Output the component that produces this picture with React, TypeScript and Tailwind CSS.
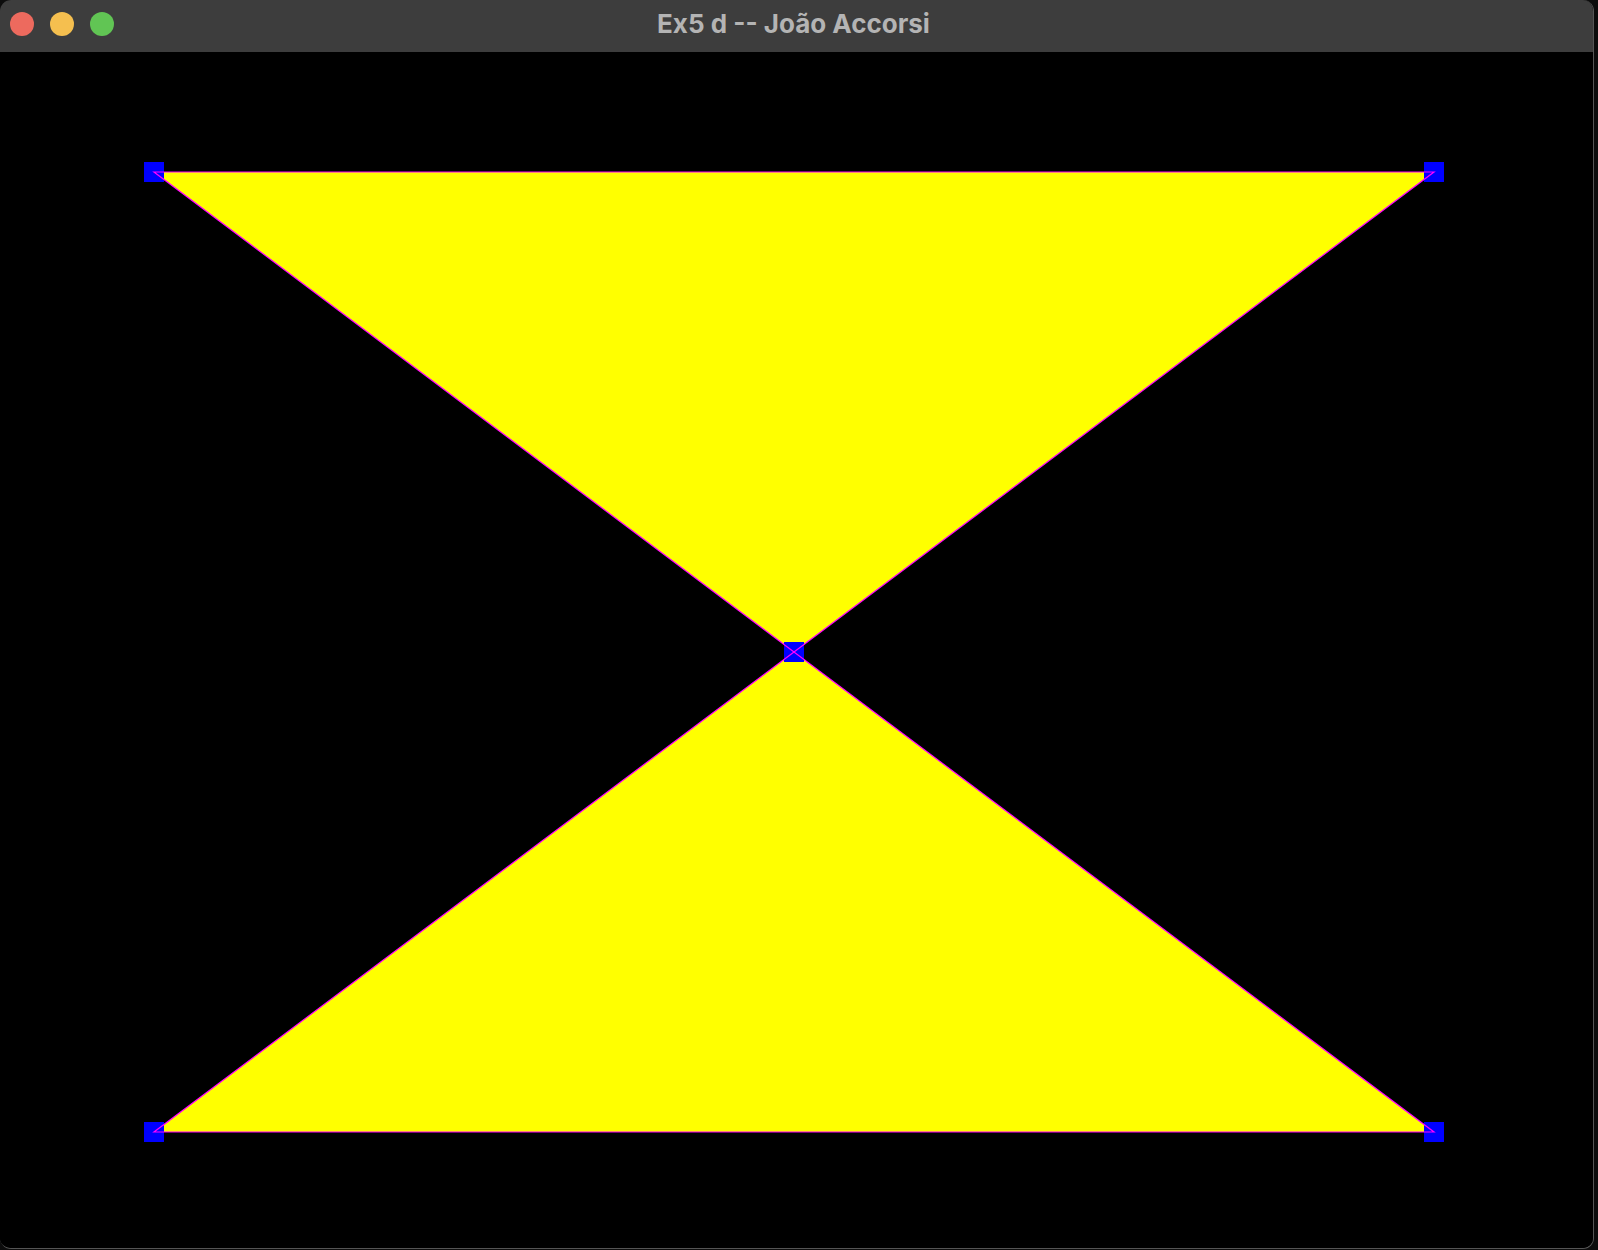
const V = {
  tl: [154, 120],
  tr: [1434, 120],
  mid: [794, 600],
  bl: [154, 1080],
  br: [1434, 1080],
};

const pts = (a: number[][]) => a.map((p) => p.join(",")).join(" ");

function Canvas() {
  const verts = Object.values(V);
  return (
    <svg width="1593" height="1196" viewBox="0 0 1593 1196" className="block">
      <polygon points={pts([V.tl, V.tr, V.mid])} fill="#ffff00" />
      <polygon points={pts([V.mid, V.bl, V.br])} fill="#ffff00" />
      {verts.map(([x, y], i) => (
        <rect key={i} x={x - 10} y={y - 10} width="20" height="20" fill="#0000ff" />
      ))}
      <g stroke="#ff00ff" strokeWidth="1.2" fill="none">
        <polygon points={pts([V.tl, V.tr, V.mid])} />
        <polygon points={pts([V.mid, V.bl, V.br])} />
      </g>
    </svg>
  );
}

export default function App() {
  return (
    <div className="w-[1598px] h-[1250px] bg-[#0c0c0c] overflow-hidden">
      <div className="w-[1594px] h-[1249px] rounded-[11px] overflow-hidden bg-black border-r border-b border-[#555555] flex flex-col">
        <div className="relative h-[52px] shrink-0 bg-[#3d3d3d] flex items-center pl-[10px] pb-[4px] gap-[16px]">
          <span className="w-[24px] h-[24px] rounded-full bg-[#ed6a5e]" />
          <span className="w-[24px] h-[24px] rounded-full bg-[#f5bf4f]" />
          <span className="w-[24px] h-[24px] rounded-full bg-[#61c554]" />
          <div className="absolute inset-0 flex items-center justify-center pb-[6px] pr-[6px] pointer-events-none">
            <span className="text-[26px] font-bold text-[#b4b4b4] font-['Inter',sans-serif]">
              Ex5 d -- João Accorsi
            </span>
          </div>
        </div>
        <div className="flex-1 bg-black">
          <Canvas />
        </div>
      </div>
    </div>
  );
}
